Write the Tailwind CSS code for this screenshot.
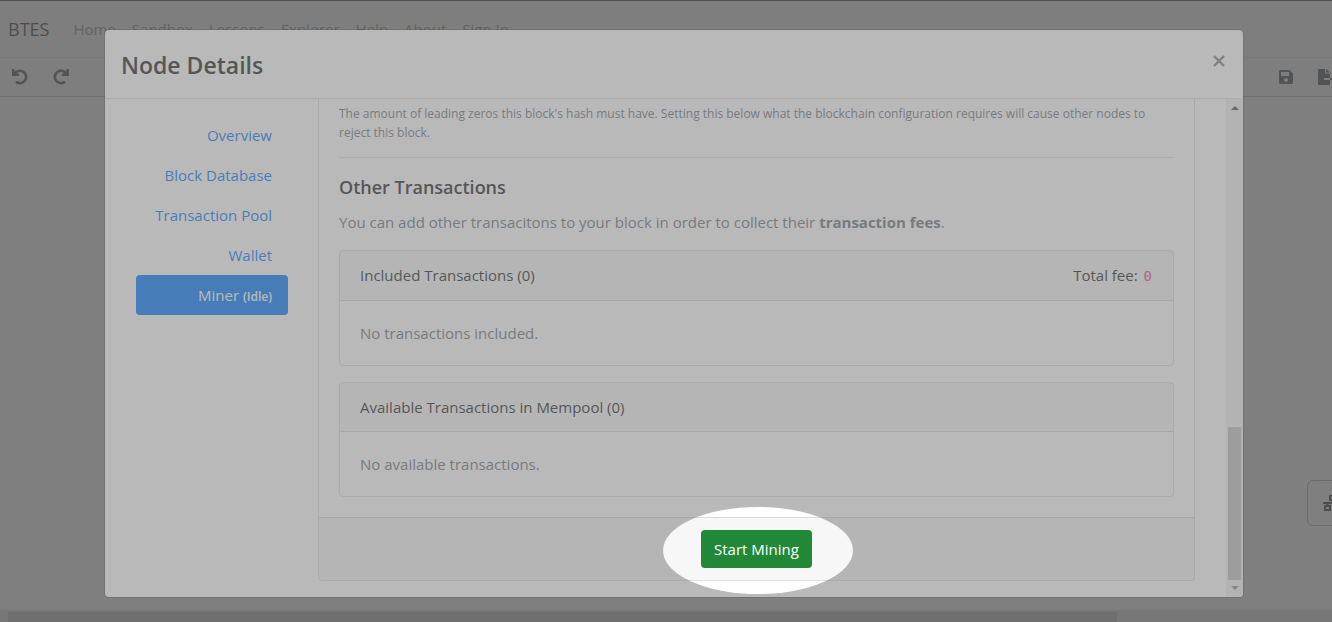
<!DOCTYPE html>
<html lang="en">
<head>
<meta charset="utf-8">
<title>BTES</title>
<script src="https://cdn.jsdelivr.net/npm/@tailwindcss/browser@4"></script>
</head>
<body class="relative h-screen overflow-hidden bg-white font-['Open_Sans',sans-serif] text-[15px] leading-6 text-[#212529]">

<!-- Sandbox page -->
<div class="flex h-screen flex-col border-t border-[#333]">
  <nav class="flex h-14 shrink-0 items-center gap-6 bg-[#f4f8f6] px-2">
    <a href="#" class="text-lg text-black/90">BTES</a>
    <div class="flex gap-4 text-black/50">
      <a href="#">Home</a><a href="#">Sandbox</a><a href="#">Lessons</a><a href="#">Explorer</a><a href="#">Help</a><a href="#">About</a><a href="#">Sign In</a>
    </div>
  </nav>
  <div class="flex h-10 shrink-0 items-center justify-between border-t border-b border-t-[#dcdfde] border-b-[#b8b8b8] bg-[#f4f8f6] pl-3 text-[#343a40]">
    <div class="flex gap-[25px]">
      <button aria-label="Undo"><svg class="size-4" viewBox="0 0 16 16" fill="none" stroke="currentColor" stroke-width="2.5"><path d="M1.300 0v5.700H7M2.500 5A6.200 6.200 0 1 1 4 12.800"/></svg></button>
      <button aria-label="Redo"><svg class="size-4" viewBox="0 0 16 16" fill="none" stroke="currentColor" stroke-width="2.5"><path d="M14.700 0v5.700H9M13.500 5A6.200 6.200 0 1 0 12 12.800"/></svg></button>
    </div>
    <div class="-mr-1 flex gap-6">
      <button aria-label="Save"><svg class="size-4" viewBox="0 0 16 16" fill="currentColor" fill-rule="evenodd"><path d="M2.500 1h9L15 4.500v9A1.500 1.500 0 0 1 13.500 15h-11A1.500 1.500 0 0 1 1 13.500v-11A1.500 1.500 0 0 1 2.500 1zM3 3v4h8V3zM8 9a2 2 0 1 0 0 4 2 2 0 0 0 0-4z"/></svg></button>
      <button aria-label="Export"><svg class="h-4 w-[18px]" viewBox="0 0 18 16" fill="currentColor" fill-rule="evenodd"><path d="M1 0h6v4.500h5V9H6v2h6v5H1a1 1 0 0 1-1-1V1a1 1 0 0 1 1-1zM8 0l4 3.500H8zM12 9h2V6.500l4 3.500-4 3.500V11h-2z"/></svg></button>
    </div>
  </div>
  <main class="flex flex-1 items-end justify-end pb-[84px]">
    <button aria-label="Network" class="-mr-5 flex h-[46px] w-[45px] items-center rounded-md border border-[#a0a0a0] pl-[15px] text-[#222]">
      <svg class="h-4 w-5" viewBox="0 0 20 16" fill="none" stroke="currentColor" stroke-width="2"><path d="M7 1h5v4H7zM2 11h5v4H2zM13 11h5v4h-5zM0 8h20M9.500 5v3M4.500 8v3M15.500 8v3"/></svg>
    </button>
  </main>
  <div class="flex h-3 shrink-0 items-end bg-[#dadada] pr-[215px] pl-2">
    <div class="h-2.5 flex-1 bg-[#b8b8b8]"></div>
  </div>
</div>

<!-- Modal -->
<div class="absolute inset-0 bg-black/50 pt-[29px] pr-[88px] pb-6 pl-[104px]">
  <section role="dialog" aria-labelledby="title" class="flex h-full flex-col rounded-[5px] border border-black/20 bg-white bg-clip-padding">
    <header class="flex h-[69px] shrink-0 items-center justify-between border-b border-[#dee2e6] px-4">
      <h2 id="title" class="pt-0.5 text-[23px] font-semibold text-[#212529]">Node Details</h2>
      <button aria-label="Close" class="mr-0.5 -mt-1.5"><svg class="size-3" viewBox="0 0 12 12" fill="none" stroke="#7f7f7f" stroke-width="2.4"><path d="M1 1l10 10M11 1L1 11"/></svg></button>
    </header>
    <div class="flex min-h-0 flex-1">
      <div class="flex flex-1 gap-[30px] pr-[31px] pb-4 pl-[31px]">
        <nav class="flex w-[152px] shrink-0 flex-col pt-4 text-right text-[#007bff]">
          <a href="#" class="px-4 py-2">Overview</a>
          <a href="#" class="px-4 py-2">Block Database</a>
          <a href="#" class="px-4 py-2">Transaction Pool</a>
          <a href="#" class="px-4 py-2">Wallet</a>
          <a href="#" class="rounded bg-[#007bff] px-4 py-2 font-medium text-white">Miner <small class="text-xs font-semibold">(Idle)</small></a>
        </nav>
        <div class="flex flex-1 flex-col rounded-b border border-t-0 border-black/12">
          <div class="flex-1 px-5 pt-[5px]">
            <p class="text-xs leading-[19px] text-[#6c757d]">The amount of leading zeros this block's hash must have. Setting this below what the blockchain configuration requires will cause other nodes to reject this block.</p>
            <hr class="mt-[15px] border-black/10">
            <h3 class="mt-[17px] text-lg leading-6 font-semibold">Other Transactions</h3>
            <p class="mt-[11px] text-[#6c757d]">You can add other transacitons to your block in order to collect their <strong>transaction fees</strong>.</p>
            <section class="mt-4 rounded border border-black/12">
              <header class="flex justify-between border-b border-black/12 bg-black/3 px-5 py-3"><h4 class="h-[25px]">Included Transactions (0)</h4><span>Total fee: <code class="mr-px ml-0.5 font-['DejaVu_Sans_Mono',monospace] text-sm text-[#e83e8c]">0</code></span></header>
              <p class="p-5 text-[#6c757d]">No transactions included.</p>
            </section>
            <section class="mt-4 rounded border border-black/12">
              <header class="border-b border-black/12 bg-black/3 px-5 py-3"><h4>Available Transactions in Mempool (0)</h4></header>
              <p class="p-5 text-[#6c757d]">No available transactions.</p>
            </section>
          </div>
          <footer class="relative flex h-[63px] shrink-0 justify-center border-t border-black/12 bg-black/3 pt-3">
            <button class="h-[38px] rounded bg-[#218838] px-[13px] text-white">Start Mining</button>
            <!-- Spotlight: everything outside the ellipse is veiled -->
            <div class="pointer-events-none absolute -top-[11px] left-1/2 z-50 -ml-[94px] h-[87px] w-[190px] rounded-[50%] shadow-[0_0_0_2000px_rgba(128,128,128,0.55)]"></div>
          </footer>
        </div>
      </div>
      <!-- Scroll bar -->
      <div class="flex w-[17px] shrink-0 flex-col items-center justify-between rounded-br bg-[#f1f1f1] pt-[7px] pb-[7px]">
        <svg class="h-1 w-2" viewBox="0 0 8 4" fill="#505050"><path d="M0 4L4 0l4 4z"/></svg>
        <div class="flex flex-col items-center gap-1.5">
          <div class="h-[153px] w-[13px] bg-[#c1c1c1]"></div>
          <svg class="h-1 w-2" viewBox="0 0 8 4" fill="#909090"><path d="M0 0l4 4 4-4z"/></svg>
        </div>
      </div>
    </div>
  </section>
</div>
</body>
</html>
